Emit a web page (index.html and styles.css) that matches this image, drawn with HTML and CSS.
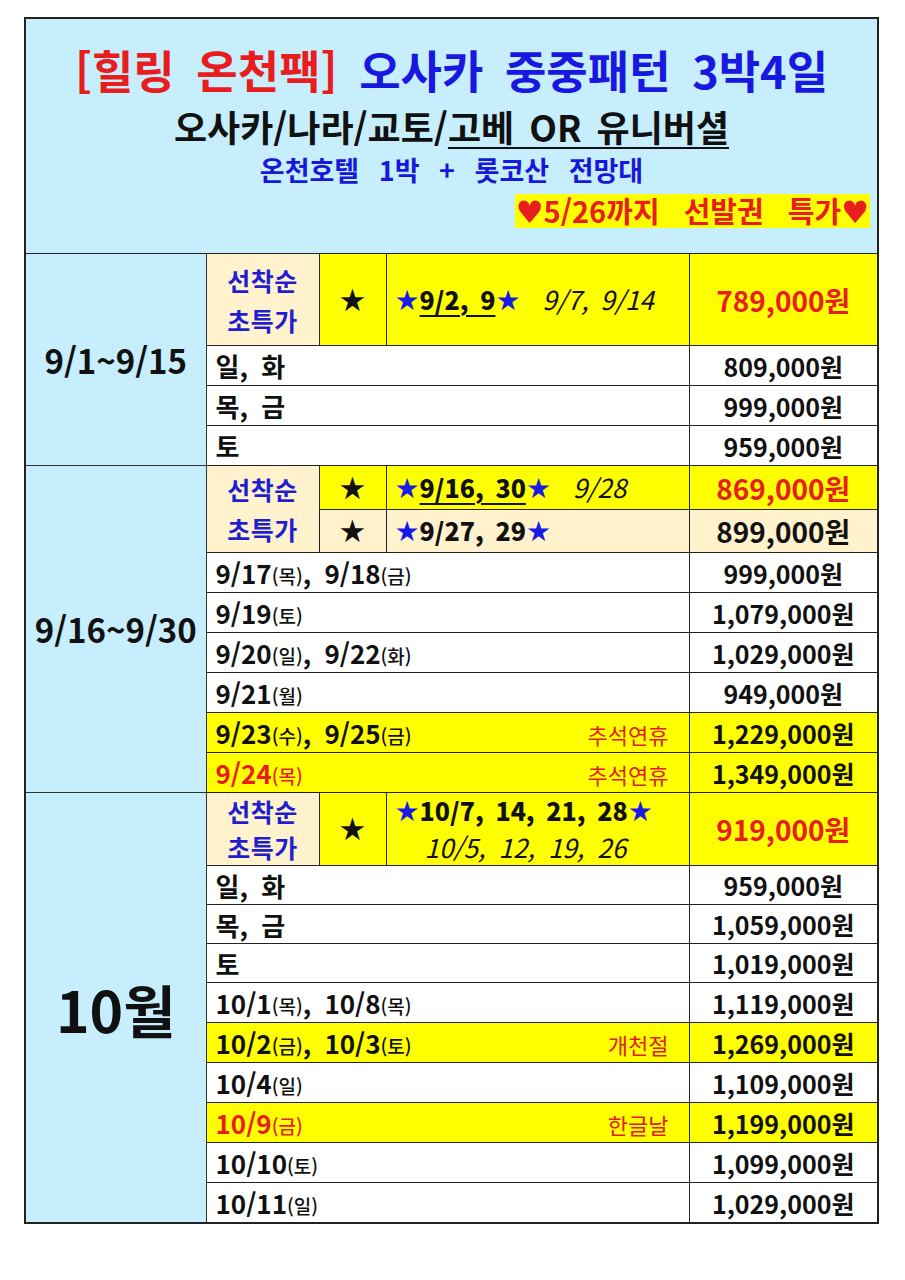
FILE: index.html
```html
<!DOCTYPE html>
<html lang="ko">
<head>
<meta charset="utf-8">
<title>힐링 온천팩 오사카 3박4일</title>
<link rel="stylesheet" href="styles.css">
</head>
<body>
<div class="sheet">
  <header class="head">
    <h1 class="title"><span class="red">[힐링 온천팩]</span> 오사카 중중패턴 3박4일</h1>
    <p class="route">오사카/나라/교토/<span class="ul">고베 OR 유니버셜</span></p>
    <p class="sub">온천호텔 1박 + 롯코산 전망대</p>
    <p class="promo"><mark><span class="heart">♥</span>5/26까지 선발권 특가<span class="heart">♥</span></mark></p>
  </header>
  <table class="grid">
    <colgroup>
      <col class="c1"><col class="c2"><col class="c3"><col class="c4"><col class="c5">
    </colgroup>
    <tbody>
      <tr class="sp1">
        <td rowspan="4" class="period">9/1~9/15</td>
        <td class="first">선착순<br>초특가</td>
        <td class="star y">★</td>
        <td class="dates y"><span class="bs">★</span><b class="ul">9/2, 9</b><span class="bs">★</span> <i>9/7, 9/14</i></td>
        <td class="price y red big">789,000원</td>
      </tr>
      <tr><td colspan="3" class="label">일, 화</td><td class="price">809,000원</td></tr>
      <tr><td colspan="3" class="label">목, 금</td><td class="price">999,000원</td></tr>
      <tr><td colspan="3" class="label">토</td><td class="price">959,000원</td></tr>

      <tr class="sp2a">
        <td rowspan="8" class="period">9/16~9/30</td>
        <td rowspan="2" class="first">선착순<br>초특가</td>
        <td class="star y">★</td>
        <td class="dates y"><span class="bs">★</span><b class="ul">9/16, 30</b><span class="bs">★</span> <i>9/28</i></td>
        <td class="price y red big">869,000원</td>
      </tr>
      <tr class="sp2b">
        <td class="star cream">★</td>
        <td class="dates cream"><span class="bs">★</span><b>9/27, 29</b><span class="bs">★</span></td>
        <td class="price cream big">899,000원</td>
      </tr>
      <tr><td colspan="3" class="label">9/17<small>(목)</small>, 9/18<small>(금)</small></td><td class="price">999,000원</td></tr>
      <tr><td colspan="3" class="label">9/19<small>(토)</small></td><td class="price">1,079,000원</td></tr>
      <tr><td colspan="3" class="label">9/20<small>(일)</small>, 9/22<small>(화)</small></td><td class="price">1,029,000원</td></tr>
      <tr><td colspan="3" class="label">9/21<small>(월)</small></td><td class="price">949,000원</td></tr>
      <tr><td colspan="3" class="label y"><div class="lab"><span>9/23<small>(수)</small>, 9/25<small>(금)</small></span><span class="hol">추석연휴</span></div></td><td class="price y">1,229,000원</td></tr>
      <tr><td colspan="3" class="label y"><div class="lab"><span class="red">9/24<small>(목)</small></span><span class="hol">추석연휴</span></div></td><td class="price y">1,349,000원</td></tr>

      <tr class="sp3">
        <td rowspan="10" class="period month">10월</td>
        <td class="first">선착순<br>초특가</td>
        <td class="star y">★</td>
        <td class="dates y two"><div><span class="bs">★</span><b>10/7, 14, 21, 28</b><span class="bs">★</span></div><div class="line2"><i>10/5, 12, 19, 26</i></div></td>
        <td class="price y red big">919,000원</td>
      </tr>
      <tr class="tight"><td colspan="3" class="label">일, 화</td><td class="price">959,000원</td></tr>
      <tr class="tight"><td colspan="3" class="label">목, 금</td><td class="price">1,059,000원</td></tr>
      <tr class="tight"><td colspan="3" class="label">토</td><td class="price">1,019,000원</td></tr>
      <tr><td colspan="3" class="label">10/1<small>(목)</small>, 10/8<small>(목)</small></td><td class="price">1,119,000원</td></tr>
      <tr><td colspan="3" class="label y"><div class="lab"><span>10/2<small>(금)</small>, 10/3<small>(토)</small></span><span class="hol">개천절</span></div></td><td class="price y">1,269,000원</td></tr>
      <tr><td colspan="3" class="label">10/4<small>(일)</small></td><td class="price">1,109,000원</td></tr>
      <tr><td colspan="3" class="label y"><div class="lab"><span class="red">10/9<small>(금)</small></span><span class="hol">한글날</span></div></td><td class="price y">1,199,000원</td></tr>
      <tr><td colspan="3" class="label">10/10<small>(토)</small></td><td class="price">1,099,000원</td></tr>
      <tr><td colspan="3" class="label">10/11<small>(일)</small></td><td class="price">1,029,000원</td></tr>
    </tbody>
  </table>
</div>
</body>
</html>
```

FILE: styles.css
```css
html, body {
  margin: 0;
  padding: 0;
  background: #ffffff;
}

body {
  font-family: "Noto Sans CJK KR", "Noto Sans", sans-serif;
  color: #111111;
}

.sheet {
  margin: 17px 0 0 24px;
  width: 851px;
  border: 2px solid #222222;
}

.head {
  background: #c6eefc;
  height: 234px;
  border-bottom: 1px solid #222222;
  display: flex;
  flex-direction: column;
  text-align: center;
}

.title {
  margin: 23px 0 0;
  font-size: 45px;
  line-height: 56px;
  font-weight: 700;
  color: #1818e0;
  word-spacing: 9px;
}

.red {
  color: #e81d1d;
}

.route {
  margin: 6px 0 0;
  font-size: 36px;
  line-height: 44px;
  font-weight: 700;
  color: #111111;
  word-spacing: 5px;
}

.ul {
  text-decoration: underline;
  text-decoration-thickness: 2px;
  text-underline-offset: 5px;
}

.sub {
  margin: 5px 0 0;
  font-size: 27px;
  line-height: 34px;
  font-weight: 700;
  color: #1818d8;
  word-spacing: 12px;
}

.promo {
  margin: 7px 0 0;
  padding-right: 7px;
  text-align: right;
  font-size: 29px;
  line-height: 32px;
  font-weight: 700;
  word-spacing: 16px;
}

.promo mark {
  background: #ffff00;
  color: #e81d1d;
  display: inline-block;
  padding: 0 1px;
}

.heart {
  font-family: "DejaVu Sans", sans-serif;
  font-size: 31px;
}

.grid {
  width: 851px;
  table-layout: fixed;
  border-collapse: collapse;
  border-style: hidden;
}

.c1 { width: 180px; }
.c2 { width: 113px; }
.c3 { width: 67px; }
.c4 { width: 303px; }
.c5 { width: 188px; }

.grid td {
  border: 1px solid #222222;
  padding: 0;
  height: 39px;
  font-weight: 700;
  background: #ffffff;
  white-space: nowrap;
}

.grid .sp1 td { height: 91px; }
.grid .sp2a td { height: 43px; }
.grid .sp2b td { height: 42px; }
.grid .sp3 td { height: 72px; }
.grid .tight td { height: 38px; }

.grid td.period {
  background: #c6eefc;
  text-align: center;
  font-size: 33px;
  color: #111111;
  border-color: #333333;
}

.grid td.month {
  font-size: 57px;
}

.grid td.first {
  background: #fff2cc;
  color: #1f1fcf;
  text-align: center;
  font-size: 25px;
  line-height: 40px;
  letter-spacing: 0.5px;
}

.grid .sp3 td.first {
  line-height: 36px;
}

.grid td.y {
  background: #ffff00;
}

.grid td.cream {
  background: #fff2cc;
}

.grid td.star {
  text-align: center;
  font-family: "DejaVu Sans", sans-serif;
  font-size: 31px;
  line-height: 36px;
  font-weight: 400;
}

.grid td.dates {
  padding-left: 8px;
  font-size: 25px;
  line-height: 36px;
  word-spacing: 6px;
}

.bs {
  color: #1a1ae6;
  font-family: "DejaVu Sans", sans-serif;
  font-weight: 400;
  font-size: 28px;
}

.dates i {
  font-weight: 400;
  font-size: 26px;
  margin-left: 10px;
}

.grid td.dates.two {
  line-height: 35px;
}

.line2 {
  padding-left: 30px;
}

.line2 i {
  margin-left: 0;
}

.grid td.price {
  text-align: center;
  font-size: 25px;
}

.grid td.price.big {
  font-size: 28px;
}

.grid td.label {
  padding-left: 9px;
  font-size: 26px;
  word-spacing: 6px;
}

.label small {
  font-size: 19px;
  font-weight: 500;
  word-spacing: 0;
}

.lab {
  display: flex;
  justify-content: space-between;
  align-items: baseline;
  padding-right: 20px;
}

.hol {
  color: #e0201b;
  font-size: 22px;
  font-weight: 400;
}
```
